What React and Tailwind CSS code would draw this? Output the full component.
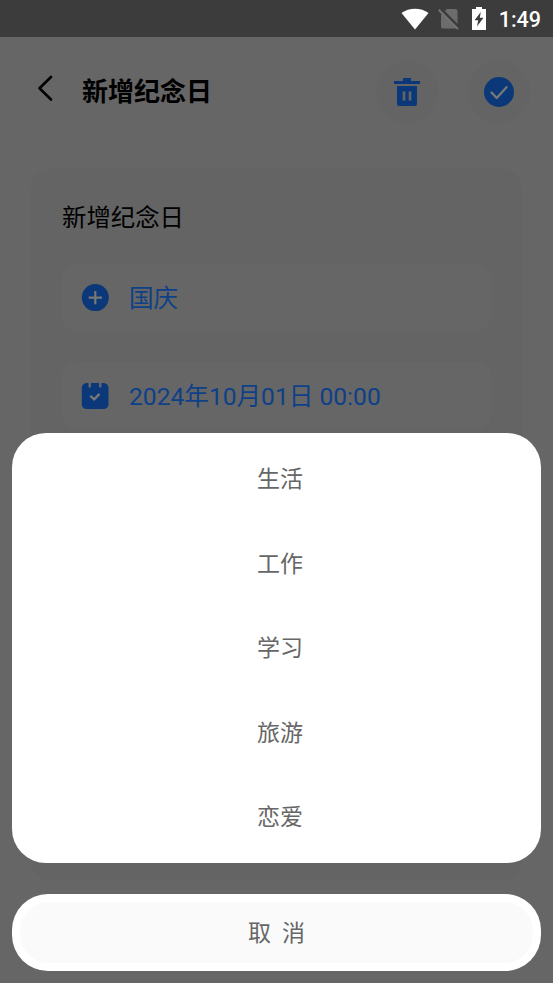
import React from 'react';

const OPTIONS = ['生活', '工作', '学习', '旅游', '恋爱'];

function StatusBar() {
  return (
    <div className="h-[37px] bg-[#3c3c3c] flex items-center justify-end pr-[12px] text-white">
      <svg width="28" height="22" viewBox="0 0 28 22" className="mr-[9px]">
        <path d="M0.5 5 C8 -0.8 20 -0.8 27.5 5 L14 21.5 Z" fill="#fff" />
      </svg>
      <svg width="22" height="22" viewBox="0 0 22 22" className="mr-[11px]">
        <path d="M9 1 H17.5 Q19.5 1 19.5 3 V19 Q19.5 20.5 17.5 20.5 H5 Q3 20.5 3 18.5 V7 Z" fill="#6c6c6c" />
        <path d="M1.2 0.3 L21.5 20.6" stroke="#3c3c3c" strokeWidth="4" />
        <path d="M0.7 1.8 L20 21.1" stroke="#757575" strokeWidth="2" />
      </svg>
      <svg width="16" height="23" viewBox="0 0 16 23" className="mr-[12px]">
        <path d="M5 0 H11 V2 H15 V23 H1 V2 H5 Z" fill="#fff" />
        <path d="M9.8 5 L3.5 13.2 H7.2 L6 19.5 L12.5 10.8 H8.8 Z" fill="#3c3c3c" />
      </svg>
      <span className="pt-[2px] text-[21.5px] leading-none font-medium">1:49</span>
    </div>
  );
}

function Header() {
  return (
    <header className="h-[132px] pt-[24px] pl-[36px] pr-[23px] flex items-start">
      <svg width="18" height="28" viewBox="0 0 18 28" className="mt-[13px]">
        <path d="M15 3 L3.5 14.3 L15 25.5" fill="none" stroke="#000" strokeWidth="2.6" strokeLinecap="round" strokeLinejoin="round" />
      </svg>
      <h1 className="ml-[28px] mt-[11px] text-[26px] leading-[40px] font-bold text-black">新增纪念日</h1>
      <div className="ml-auto flex gap-[30px]">
        <button className="size-[62px] rounded-full bg-[#646464] flex items-center justify-center">
          <svg width="26" height="28" viewBox="0 0 26 28">
            <path d="M9 0 H17 V3 H26 V6 H0 V3 H9 Z M3 8 H23 V26 Q23 28 21 28 H5 Q3 28 3 26 Z" fill="#0a3878" />
            <path d="M10 13.5 V22.5 M16 13.5 V22.5" stroke="#666" strokeWidth="2.6" />
          </svg>
        </button>
        <button className="size-[62px] rounded-full bg-[#646464] flex items-center justify-center">
          <svg width="30" height="30" viewBox="0 0 30 30">
            <circle cx="15" cy="15" r="15" fill="#0a3878" />
            <path d="M7.5 15.5 L12.7 21 L22.5 10.2" fill="none" stroke="#777" strokeWidth="2.4" strokeLinecap="round" strokeLinejoin="round" />
          </svg>
        </button>
      </div>
    </header>
  );
}

function Field({ icon, children }) {
  return (
    <div className="h-[67px] rounded-[16px] bg-[#666] flex items-center gap-[20px] pl-[20px] text-[24.6px] text-[#0e4088]">
      {icon}
      <span className="pt-[4px] whitespace-nowrap">{children}</span>
    </div>
  );
}

const plusIcon = (
  <svg width="28" height="28" viewBox="0 0 28 28">
    <circle cx="14.3" cy="13.6" r="13.5" fill="#0a3878" />
    <path d="M14.3 7 V20.2 M7.7 13.6 H20.9" stroke="#777" strokeWidth="2.2" />
  </svg>
);

const calendarIcon = (
  <svg width="28" height="28" viewBox="0 0 28 28">
    <path d="M5 1 H7.5 V5.5 H10 V1 H18 V5.5 H20.5 V1 H23 Q27.5 2 27.5 6 V22 Q27.5 27 22 27 H6 Q0.8 27 0.8 22 V6 Q0.8 2 5 1 Z" fill="#0a3878" />
    <path d="M9.3 13.8 L13.2 17.3 L18.5 11.8" fill="none" stroke="#777" strokeWidth="2.4" />
  </svg>
);

function ActionSheet() {
  return (
    <div className="absolute inset-x-3 bottom-3 flex flex-col gap-[31px] text-[23px] text-[#666]">
      <ul className="h-[430px] rounded-[34px] bg-white pt-[5px] pl-[7px]">
        {OPTIONS.map((name) => (
          <li key={name} className="h-[84.5px] flex items-center justify-center">{name}</li>
        ))}
      </ul>
      <button className="h-[77px] rounded-[36px] bg-white p-2">
        <span className="h-full rounded-[29px] bg-[#fafafa] pt-[3px] flex items-center justify-center gap-[11px]">
          <span>取</span>
          <span>消</span>
        </span>
      </button>
    </div>
  );
}

export default function App() {
  return (
    <div className="relative h-[983px] overflow-hidden bg-[#666] font-[Roboto,'Noto_Sans_CJK_SC',sans-serif]">
      <StatusBar />
      <Header />
      <main className="mx-[31px] h-[711px] rounded-[20px] bg-[#646464] px-[30px] pt-[29px]">
        <h2 className="pl-px text-[24.4px] leading-[40px] text-black">新增纪念日</h2>
        <div className="mt-[26px] flex flex-col gap-[31px]">
          <Field icon={plusIcon}>国庆</Field>
          <Field icon={calendarIcon}>2024年10月01日 00:00</Field>
        </div>
      </main>
      <ActionSheet />
    </div>
  );
}
